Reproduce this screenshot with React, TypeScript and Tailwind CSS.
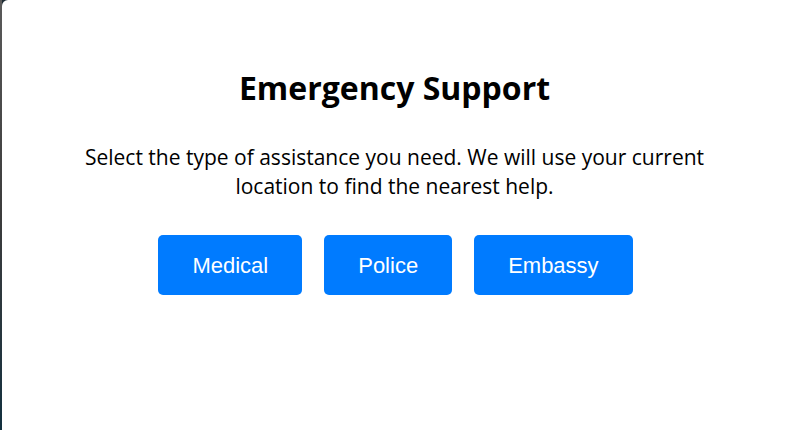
const options = ['Medical', 'Police', 'Embassy']

const App = () => {
  return (
    <div className="flex h-[430px] w-[787px] bg-[#1c2a33]">
      {/* backdrop sliver on the left */}
      <div className="w-[2px] bg-gradient-to-b from-[#5a5a5a] via-[#3c3c3c] to-[#12303f]" />

      <div className="flex flex-1 flex-col items-center rounded-tl-[6px] bg-white pt-[68px]">
        <h2 className="font-['Open_Sans',sans-serif] text-[32px] font-bold leading-[40px] text-black">
          Emergency Support
        </h2>

        <p className="mt-[35px] max-w-[660px] text-center font-['Open_Sans',sans-serif] text-[21px] leading-[29px] text-black">
          Select the type of assistance you need. We will use your current location to find the nearest help.
        </p>

        <div className="mt-[34px] flex gap-[22px] pl-[2px]">
          {options.map((label) => (
            <button
              key={label}
              className="h-[60px] rounded-[5px] bg-[#007bff] px-[34px] font-['Liberation_Sans',Arial,sans-serif] text-[22px] text-white"
            >
              {label}
            </button>
          ))}
        </div>
      </div>
    </div>
  )
}

export default App
